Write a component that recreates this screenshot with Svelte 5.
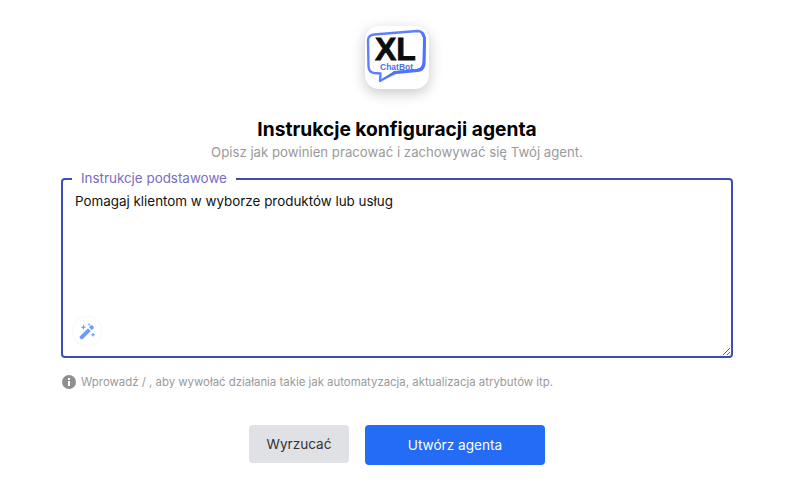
<script lang="ts">
	let instructions = $state('Pomagaj klientom w wyborze produktów lub usług');
</script>

<main class="page">
	<div class="logo">
		<svg width="64" height="64" viewBox="0 0 64 64">
			<path
				d="M9 8.5 L52 5 Q59 5 59.5 12 L59 36 Q58.5 43 52 44 L30 46.5 L15 55 L15.5 47.5 L9 47 Q3.5 46 3.5 40 L3 14 Q3.5 9 9 8.5 Z"
				fill="#fff"
				stroke="#5f80fb"
				stroke-width="2.4"
				stroke-linejoin="round"
			/>
			<path d="M55 5.5 Q61 7 61 14 L60.5 38 Q60 45 53 46 L31 48 L15 55 L29 45 L52 43 Q57 42 57.5 36 L58 12 Z" fill="#4f73fb" />
			<text x="10" y="34" class="xl">XL</text>
			<text x="15" y="44" class="chatbot">ChatBot</text>
		</svg>
	</div>

	<h1>Instrukcje konfiguracji agenta</h1>
	<p class="subtitle">Opisz jak powinien pracować i zachowywać się Twój agent.</p>

	<div class="field">
		<span class="legend">Instrukcje podstawowe</span>
		<textarea bind:value={instructions} spellcheck="false"></textarea>
		<button class="magic" aria-label="Generuj">
			<svg width="17" height="17" viewBox="0 0 17 17" fill="#6f9bf5">
				<path d="M1 13.2 L9 5.2 L11.8 8 L3.8 16 Q2.8 16.8 1.8 16 L1 15.2 Q.2 14.2 1 13.2 Z" />
				<path d="M10 4.2 L11.6 2.6 Q12.6 1.8 13.6 2.6 L14.4 3.4 Q15.2 4.4 14.4 5.4 L12.8 7 Z" />
				<path d="M4.5 1.5 l.8 2 2 .8 -2 .8 -.8 2 -.8 -2 -2 -.8 2 -.8 Z" />
				<path d="M10 0 l.4 1.1 1.1.4 -1.1.4 -.4 1.1 -.4 -1.1 -1.1 -.4 1.1 -.4 Z" />
				<path d="M14 9.5 l.7 1.6 1.6.7 -1.6.7 -.7 1.6 -.7 -1.6 -1.6 -.7 1.6 -.7 Z" />
			</svg>
		</button>
	</div>

	<div class="hint">
		<svg width="14" height="14" viewBox="0 0 14 14">
			<circle cx="7" cy="7" r="7" fill="#8f8f8f" />
			<rect x="6" y="6" width="2" height="5" fill="#fff" />
			<rect x="6" y="3" width="2" height="2" fill="#fff" />
		</svg>
		<span>Wprowadź / , aby wywołać działania takie jak automatyzacja, aktualizacja atrybutów itp.</span>
	</div>

	<div class="actions">
		<button class="btn discard">Wyrzucać</button>
		<button class="btn create">Utwórz agenta</button>
	</div>
</main>

<style>
	:global(body) {
		background: #fff;
		font-family: Inter, "Noto Sans", sans-serif;
	}

	.page {
		display: flex;
		flex-direction: column;
		align-items: center;
		padding: 26px 72px 0 61px;
		width: 805px;
		box-sizing: border-box;
		height: 503px;
		overflow: hidden;
	}

	.logo {
		width: 64px;
		height: 63px;
		background: #fff;
		border-radius: 14px;
		box-shadow: 0 4px 14px rgba(0, 0, 0, 0.22);
	}

	.logo svg {
		display: block;
	}

	.xl {
		font-family: "Liberation Sans", sans-serif;
		font-weight: 700;
		font-size: 32px;
		fill: #0c0c0c;
		stroke: #0c0c0c;
		stroke-width: 0.8;
	}

	.chatbot {
		font-family: "Liberation Sans", sans-serif;
		font-weight: 700;
		font-size: 8.5px;
		fill: #4f6ff0;
	}

	h1 {
		margin: 29px 0 0;
		font-size: 19.2px;
		line-height: 22px;
		font-weight: 700;
		color: #000;
	}

	.subtitle {
		margin: 2px 0 0;
		font-size: 13.2px;
		line-height: 20px;
		color: #9a9a9a;
	}

	.field {
		position: relative;
		margin-top: 16px;
		width: 100%;
		height: 180px;
		box-sizing: border-box;
		border: 2px solid #3d4db7;
		border-radius: 4px;
	}

	.legend {
		position: absolute;
		top: -10px;
		left: 9px;
		padding: 0 9px;
		font-size: 13.4px;
		line-height: 16px;
		color: #7a6cc4;
		background: #fff;
	}

	textarea {
		display: block;
		width: 100%;
		height: 100%;
		box-sizing: border-box;
		border: none;
		outline: none;
		padding: 11px 12px;
		font-family: inherit;
		font-size: 13.4px;
		line-height: 20px;
		color: #111;
		background: transparent;
	}

	.magic {
		position: absolute;
		left: 10px;
		bottom: 11px;
		width: 28px;
		height: 28px;
		padding: 0;
		display: flex;
		align-items: center;
		justify-content: center;
		background: #fff;
		border: none;
		border-radius: 50%;
		box-shadow: 0 0 3px rgba(0, 0, 0, 0.08);
	}

	.hint {
		align-self: flex-start;
		display: flex;
		align-items: center;
		gap: 5px;
		margin: 17px 0 0 1px;
		font-size: 11.4px;
		line-height: 14px;
		color: #9a9a9a;
	}

	.actions {
		display: flex;
		align-items: flex-start;
		gap: 16px;
		margin-top: 36px;
	}

	.btn {
		border: none;
		border-radius: 4px;
		font-family: inherit;
		font-size: 13.6px;
		font-weight: 400;
	}

	.discard {
		width: 100px;
		height: 38px;
		background: #e0e1e5;
		color: #333;
	}

	.create {
		width: 180px;
		height: 40px;
		background: #246bf5;
		color: #fff;
	}
</style>
